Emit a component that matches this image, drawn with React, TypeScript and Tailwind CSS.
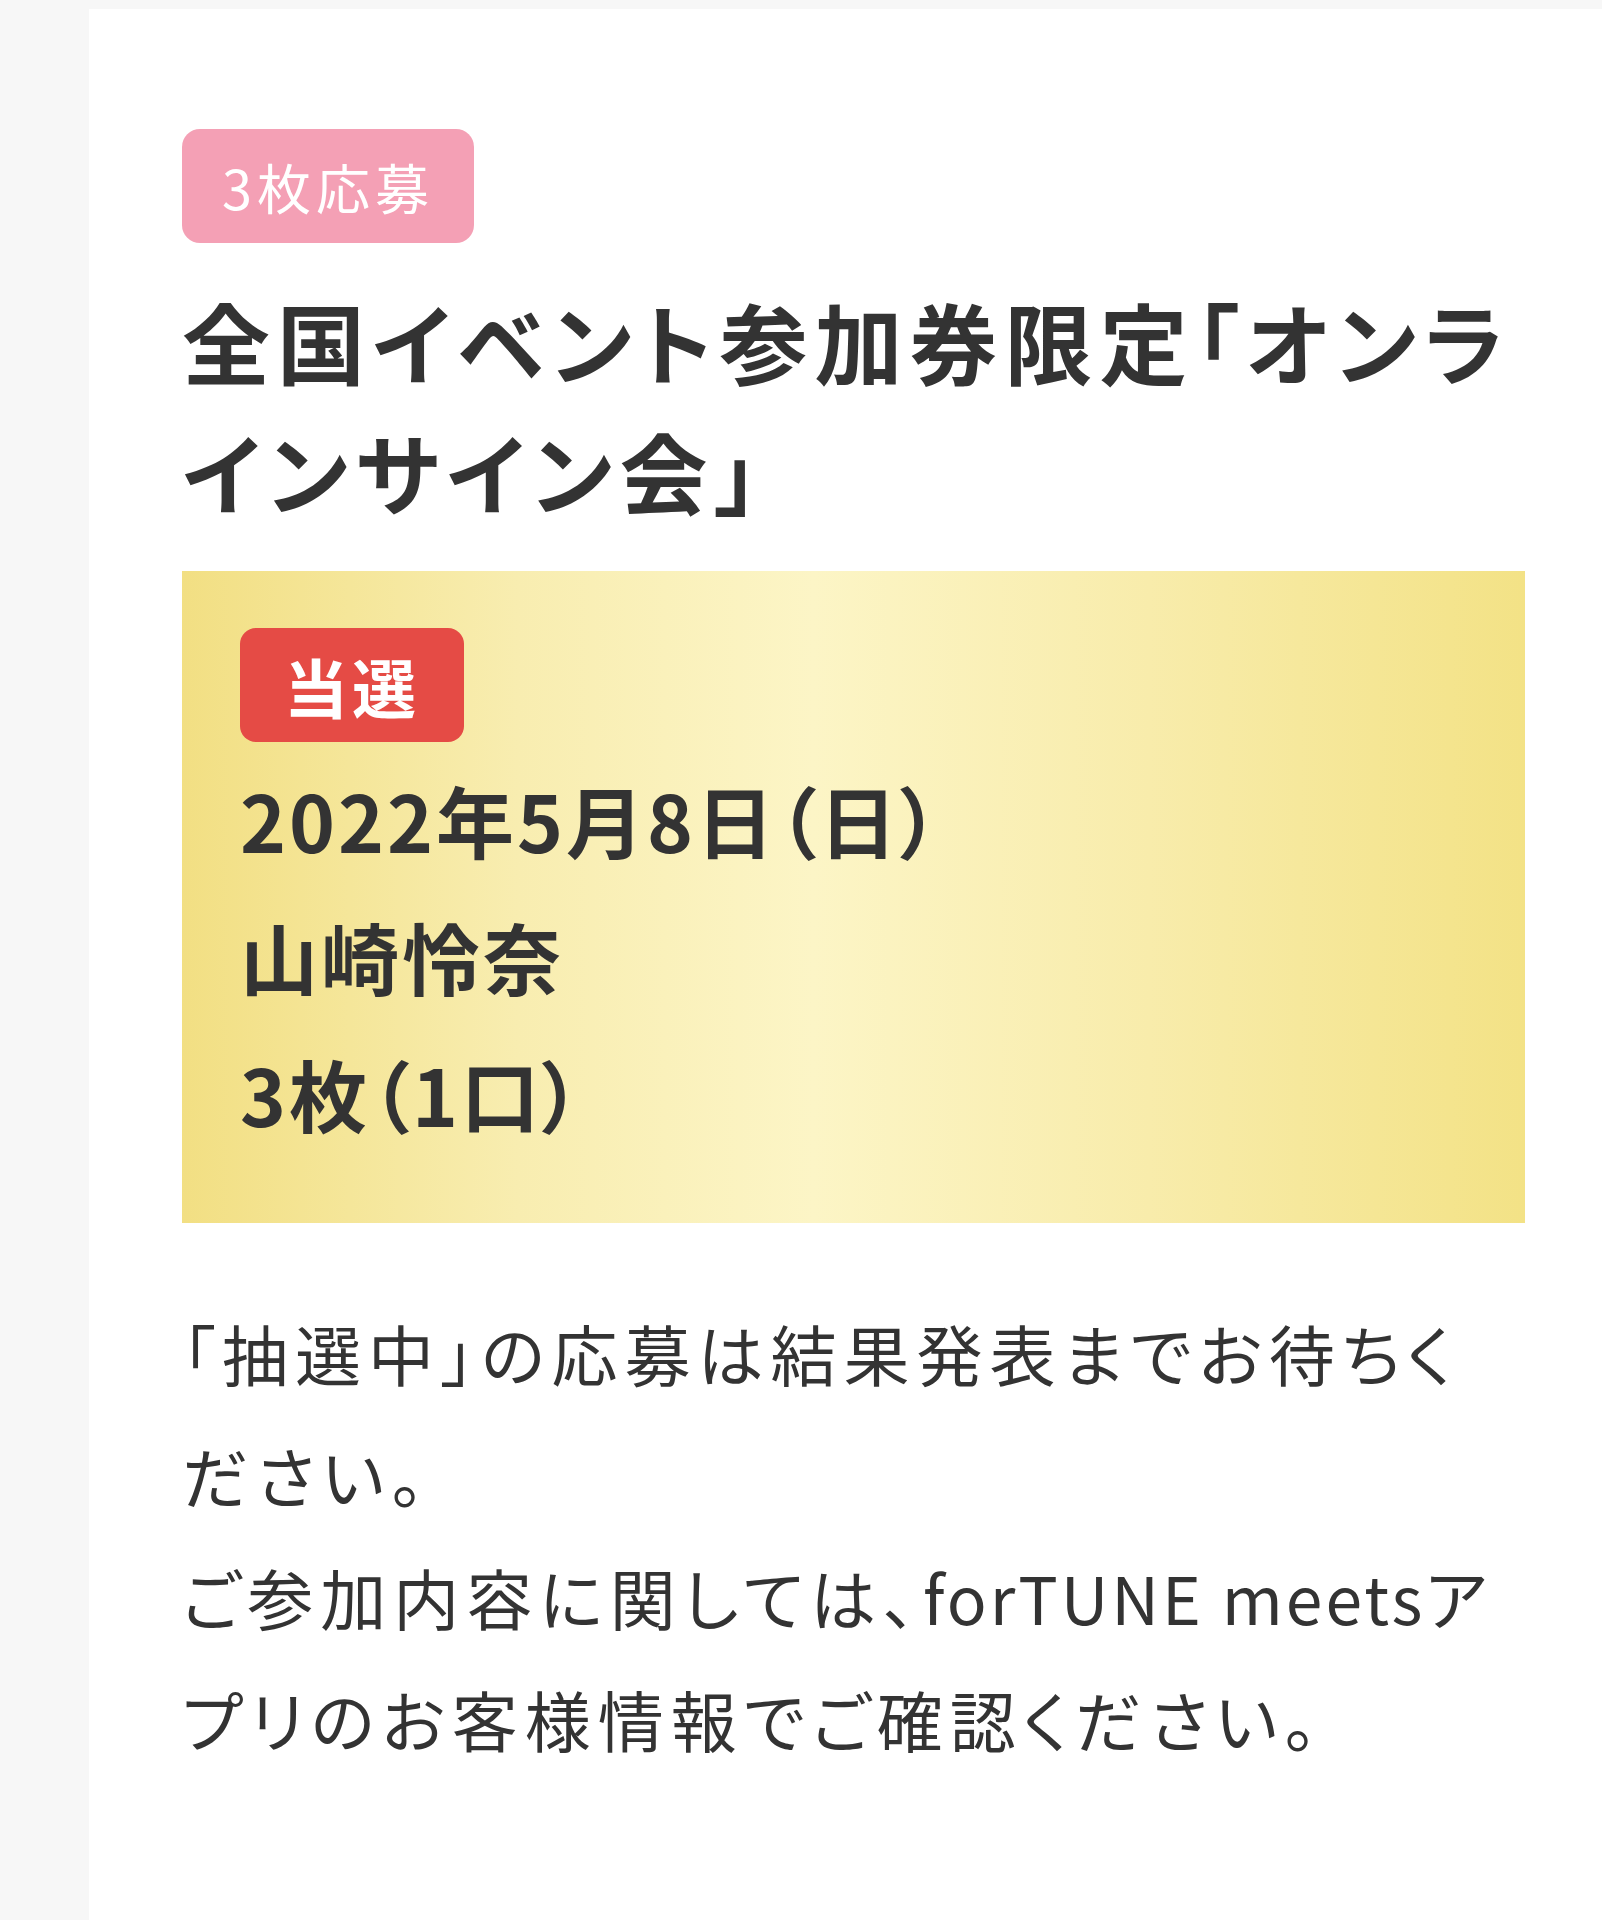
import React from 'react';

// 応募結果カード
function Badge({ children, className }: { children: React.ReactNode; className: string }) {
  return (
    <span className={`inline-flex items-center justify-center h-[114px] text-white ${className}`}>
      {children}
    </span>
  );
}

export default function App() {
  return (
    <div className="min-h-[1920px] bg-[#f7f7f7] pt-[9px] pl-[89px] font-['Noto_Sans_CJK_JP',sans-serif] text-[#333333]">
      <div className="min-h-[1911px] bg-white pl-[93px] pr-[77px] pt-[120px]">
        {/* 応募枚数 */}
        <Badge className="rounded-[18px] bg-[#f4a0b5] px-[40px] text-[54px] tracking-[5px]">3枚応募</Badge>

        {/* イベント名 */}
        <h1 className="mt-[32px] whitespace-nowrap text-[88px] font-bold leading-[130px] tracking-[7px] [font-feature-settings:'palt']">
          全国イベント参加券限定「オンラ
          <br />
          インサイン会」
        </h1>

        {/* 当選内容 */}
        <div className="mt-[36px] bg-[linear-gradient(90deg,#f2df83_0%,#f8edb0_25%,#fcf5c6_47%,#f8ecab_72%,#f3e286_100%)] px-[58px] pt-[57px] pb-[61px]">
          <Badge className="rounded-[16px] bg-[#e54b45] px-[44px] text-[64px] font-bold tracking-[4px]">当選</Badge>
          <div className="mt-[9px] text-[78px] font-bold leading-[137px] tracking-[3px] [font-feature-settings:'palt']">
            <p>2022年5月8日（日）</p>
            <p>山崎怜奈</p>
            <p>3枚（1口）</p>
          </div>
        </div>

        {/* 注意書き */}
        <p className="mt-[68px] whitespace-nowrap text-[66px] leading-[122px] tracking-[7px] [font-feature-settings:'palt']">
          「抽選中」の応募は結果発表までお待ちく
          <br />
          ださい。
          <br />
          ご参加内容に関しては、<span className="tracking-[3px]">forTUNE meets</span>ア
          <br />
          プリのお客様情報でご確認ください。
        </p>
      </div>
    </div>
  );
}
